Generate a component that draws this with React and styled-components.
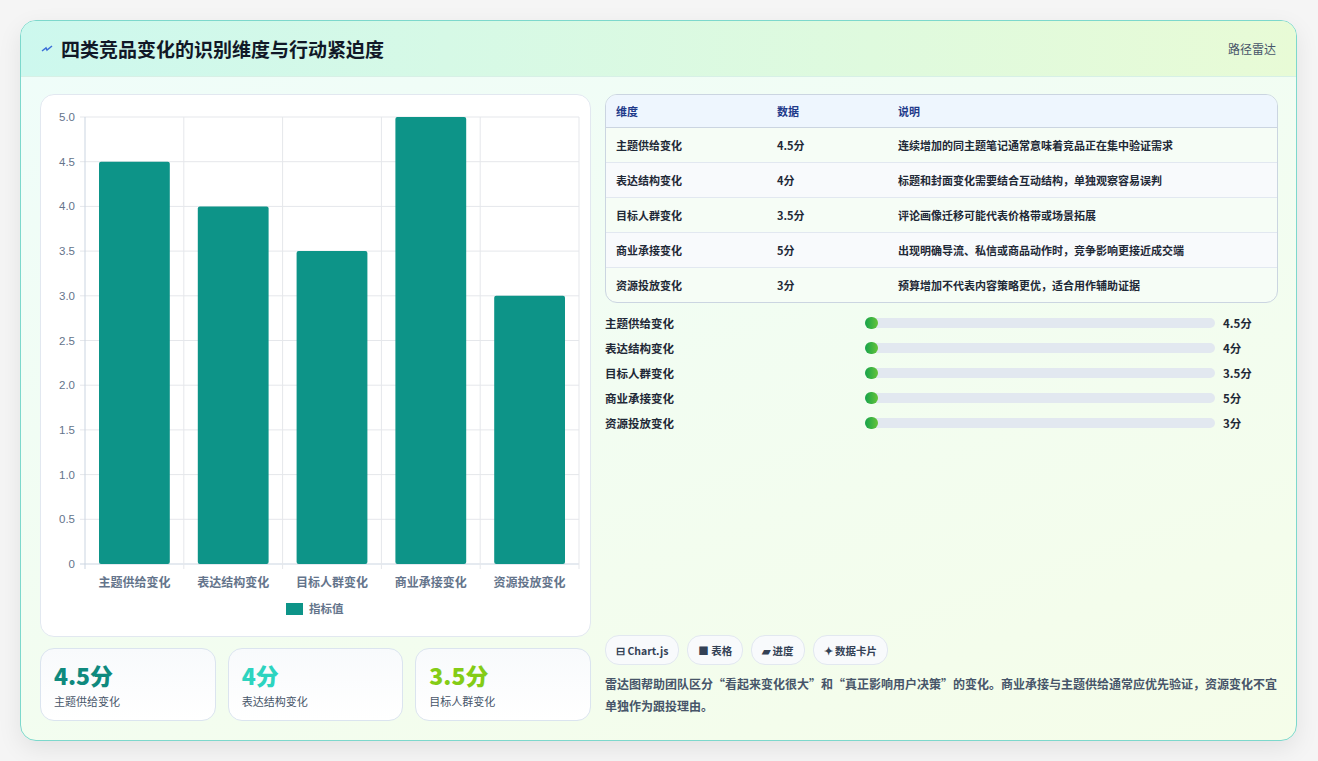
import React from 'react';
import styled, { createGlobalStyle } from 'styled-components';

const Global = createGlobalStyle`
  body { margin: 0; background: #f3f4f6; font-family: "Noto Sans CJK SC", "Noto Sans", sans-serif; }
`;

const Page = styled.div`
  width: 1318px;
  height: 761px;
  padding: 20px 21px 0 20px;
  box-sizing: border-box;
  background: #f5f5f5;
`;

const Card = styled.div`
  height: 719px;
  border: 1px solid #7dd8cc;
  border-radius: 16px;
  overflow: hidden;
  background: linear-gradient(160deg, #effdfa 0%, #f5fde9 100%);
  box-shadow: 0 8px 24px rgba(0, 0, 0, 0.08);
  display: flex;
  flex-direction: column;
`;

const Header = styled.header`
  height: 55px;
  flex: none;
  display: flex;
  align-items: center;
  justify-content: space-between;
  padding: 0 20px;
  background: linear-gradient(90deg, #cdf8ee 0%, #e8fbd6 100%);
  border-bottom: 1px solid #d7f0e6;
`;

const Title = styled.h1`
  margin: 0;
  font-size: 19px;
  font-weight: 700;
  color: #111827;
  display: flex;
  align-items: center;
  gap: 8px;
`;

const Tag = styled.span`
  font-size: 12px;
  color: #475569;
`;

const Body = styled.div`
  flex: 1;
  display: grid;
  grid-template-columns: 551px 1fr;
  gap: 14px;
  padding: 17px 18px 18px 19px;
`;

const Col = styled.div`
  display: flex;
  flex-direction: column;
  gap: 11px;
  min-width: 0;
`;

const ChartCard = styled.div`
  height: 543px;
  background: #fff;
  border: 1px solid #e2e8f0;
  border-radius: 14px;
  box-sizing: border-box;
`;

const Stats = styled.div`
  display: grid;
  grid-template-columns: repeat(3, 1fr);
  gap: 12px;
`;

const Stat = styled.div`
  height: 73px;
  box-sizing: border-box;
  padding: 10px 13px;
  border: 1px solid #dbe4ef;
  border-radius: 14px;
  background: linear-gradient(180deg, #f8fafc 0%, #ffffff 100%);
`;

const StatValue = styled.div`
  font-size: 23px;
  font-weight: 800;
  line-height: 32px;
  color: ${(p) => p.color};
`;

const StatLabel = styled.div`
  font-size: 11px;
  color: #475569;
  margin-top: 2px;
`;

const Table = styled.table`
  width: 100%;
  border-collapse: separate;
  border-spacing: 0;
  border: 1px solid #cbd5e1;
  border-radius: 12px;
  overflow: hidden;
  font-size: 11px;
  background: #f6fdf6;
  th {
    background: #eef6fe;
    color: #1e3a8a;
    font-weight: 700;
    text-align: left;
    height: 32px;
    padding: 0 10px;
    border-bottom: 1px solid #cbd5e1;
  }
  td {
    height: 34px;
    padding: 0 10px;
    color: #1f2937;
    font-weight: 600;
    border-top: 1px solid #e2e8f0;
  }
  tbody tr:first-child td { border-top: none; }
  tbody tr:nth-child(even) td { background: #f8fafc; }
`;

const Bars = styled.div`
  display: flex;
  flex-direction: column;
  gap: 7px;
  margin-top: 0;
`;

const BarRow = styled.div`
  display: grid;
  grid-template-columns: 252px 350px 1fr;
  gap: 8px;
  align-items: center;
  height: 18px;
  font-size: 11.5px;
  font-weight: 600;
  color: #1f2937;
`;

const Track = styled.div`
  height: 10px;
  border-radius: 5px;
  background: #e2e8f0;
  position: relative;
`;

const Fill = styled.div`
  position: absolute;
  left: 0;
  top: -1px;
  width: 13px;
  height: 12px;
  border-radius: 6px;
  background: linear-gradient(90deg, #16a34a, #65c43a);
`;

const Value = styled.span`
  font-weight: 700;
`;

const Spacer = styled.div`
  flex: 1;
`;

const Pills = styled.div`
  display: flex;
  gap: 8px;
`;

const Pill = styled.span`
  height: 28px;
  padding: 0 10px;
  display: inline-flex;
  align-items: center;
  gap: 3px;
  font-size: 10.5px;
  font-weight: 700;
  color: #334155;
  border: 1px solid #e2e8f0;
  border-radius: 14px;
  background: #f8fafc;
`;

const Note = styled.p`
  margin: 8px 0 5px;
  font-size: 12px;
  line-height: 22px;
  font-weight: 600;
  color: #475569;
`;

const rows = [
  ['主题供给变化', 4.5, '连续增加的同主题笔记通常意味着竞品正在集中验证需求'],
  ['表达结构变化', 4, '标题和封面变化需要结合互动结构，单独观察容易误判'],
  ['目标人群变化', 3.5, '评论画像迁移可能代表价格带或场景拓展'],
  ['商业承接变化', 5, '出现明确导流、私信或商品动作时，竞争影响更接近成交端'],
  ['资源投放变化', 3, '预算增加不代表内容策略更优，适合用作辅助证据'],
];

const L = 44, R = 538, T = 22, B = 469;
const yOf = (v) => B - (v / 5) * (B - T);
const cw = (R - L) / 5;

function BarChart() {
  const ticks = [0, 0.5, 1, 1.5, 2, 2.5, 3, 3.5, 4, 4.5, 5];
  return (
    <svg width="549" height="541" viewBox="0 0 549 541">
      {ticks.map((t) => (
        <g key={t}>
          <line x1={L - 5} x2={R} y1={yOf(t)} y2={yOf(t)} stroke={t === 0 ? '#cbd5e1' : '#e5e7eb'} />
          <text x={L - 10} y={yOf(t) + 4} textAnchor="end" fontSize="11.5" fill="#64748b" fontFamily="Liberation Sans, sans-serif">
            {t === 0 ? '0' : t.toFixed(1)}
          </text>
        </g>
      ))}
      {[0, 1, 2, 3, 4, 5].map((i) => (
        <line key={i} x1={L + i * cw} x2={L + i * cw} y1={T} y2={B + 5} stroke={i === 0 ? '#cbd5e1' : '#e5e7eb'} />
      ))}
      {rows.map(([n, v], i) => (
        <g key={n}>
          <rect x={L + i * cw + 14} y={yOf(v)} width={cw - 28} height={B - yOf(v)} fill="#0d9488" rx="2" />
          <text x={L + i * cw + cw / 2} y={B + 23} textAnchor="middle" fontSize="12" fontWeight="600" fill="#64748b">{n}</text>
        </g>
      ))}
      <rect x="245" y="508" width="17" height="12" fill="#0d9488" />
      <text x="268" y="518" fontSize="11.5" fontWeight="600" fill="#64748b">指标值</text>
    </svg>
  );
}

export default function App() {
  return (
    <Page>
      <Global />
      <Card>
        <Header>
          <Title>
            <svg width="12" height="10" viewBox="0 0 12 10">
              <path d="M1 7 L5 4 L6 6 L11 2" stroke="#3b6fd8" strokeWidth="1.5" fill="none" />
            </svg>
            四类竞品变化的识别维度与行动紧迫度
          </Title>
          <Tag>路径雷达</Tag>
        </Header>
        <Body>
          <Col>
            <ChartCard><BarChart /></ChartCard>
            <Stats>
              <Stat><StatValue color="#0f8a7e">4.5分</StatValue><StatLabel>主题供给变化</StatLabel></Stat>
              <Stat><StatValue color="#2dd4bf">4分</StatValue><StatLabel>表达结构变化</StatLabel></Stat>
              <Stat><StatValue color="#84cc16">3.5分</StatValue><StatLabel>目标人群变化</StatLabel></Stat>
            </Stats>
          </Col>
          <Col>
            <Table>
              <colgroup><col style={{ width: 161 }} /><col style={{ width: 121 }} /><col /></colgroup>
              <thead><tr><th>维度</th><th>数据</th><th>说明</th></tr></thead>
              <tbody>
                {rows.map(([n, v, d]) => (
                  <tr key={n}><td>{n}</td><td>{v}分</td><td>{d}</td></tr>
                ))}
              </tbody>
            </Table>
            <Bars>
              {rows.map(([n, v]) => (
                <BarRow key={n}>
                  <span>{n}</span>
                  <Track><Fill /></Track>
                  <Value>{v}分</Value>
                </BarRow>
              ))}
            </Bars>
            <Spacer />
            <div>
              <Pills>
                <Pill>⊟ Chart.js</Pill>
                <Pill>■ 表格</Pill>
                <Pill>▰ 进度</Pill>
                <Pill>✦ 数据卡片</Pill>
              </Pills>
              <Note>雷达图帮助团队区分“看起来变化很大”和“真正影响用户决策”的变化。商业承接与主题供给通常应优先验证，资源变化不宜单独作为跟投理由。</Note>
            </div>
          </Col>
        </Body>
      </Card>
    </Page>
  );
}
